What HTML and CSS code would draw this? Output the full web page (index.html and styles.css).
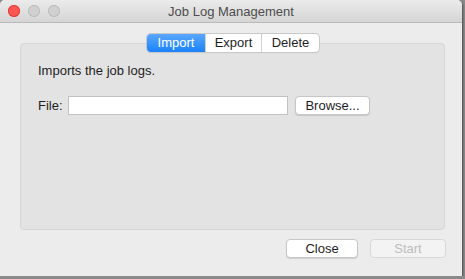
FILE: index.html
```html
<!DOCTYPE html>
<html>
<head>
    <link rel="stylesheet" href="styles.css">
</head>
<body>
<div class="window">
    <div class="titlebar">
        <div class="lights">
            <span class="light close-light"></span>
            <span class="light"></span>
            <span class="light"></span>
        </div>
        <div class="title">Job Log Management</div>
    </div>
    <div class="content">
        <div class="group">
            <div class="tabs">
                <span class="tab tab-active">Import</span>
                <span class="tab tab-mid">Export</span>
                <span class="tab">Delete</span>
            </div>
            <p class="desc">Imports the job logs.</p>
            <div class="file-row">
                <span class="file-label">File:</span>
                <input class="file-box" type="text">
                <button class="btn browse">Browse...</button>
            </div>
        </div>
        <div class="actions">
            <button class="btn action">Close</button>
            <button class="btn action disabled">Start</button>
        </div>
    </div>
</div>
</body>
</html>
```

FILE: styles.css
```css
body {
  margin: 0;
  background-color: #8a8a8a;
  font-family: "Liberation Sans", Arial, sans-serif;
  font-size: 13px;
  color: #1e1e1e;
}

.window {
  width: 462px;
  height: 276px;
  background-color: #ececec;
  border-radius: 5px 5px 0 0;
  box-shadow: 1px 1px 2px rgba(0, 0, 0, 0.45);
  overflow: hidden;
  display: flex;
  flex-direction: column;
}

.titlebar {
  height: 22px;
  background: linear-gradient(#ebebeb, #d5d5d5);
  border-bottom: 1px solid #b9b9b9;
  position: relative;
  display: flex;
  align-items: center;
  justify-content: center;
}

.lights {
  position: absolute;
  left: 8px;
  top: 5px;
  display: flex;
  gap: 8px;
}

.light {
  width: 12px;
  height: 12px;
  border-radius: 50%;
  background-color: #d0d0d0;
  box-shadow: inset 0 0 0 1px #bdbdbd;
}

.close-light {
  background-color: #fc5753;
  box-shadow: inset 0 0 0 1px #df3d39;
}

.title {
  font-size: 13px;
  color: #4d4d4d;
}

.content {
  flex: 1;
  padding: 20px 17px 0 20px;
  display: flex;
  flex-direction: column;
}

.group {
  position: relative;
  height: 185px;
  background-color: #e3e3e3;
  border: 1px solid #d6d6d6;
  border-radius: 4px;
  padding: 0 17px;
}

.tabs {
  position: absolute;
  left: 126px;
  top: -10px;
  display: flex;
  background-color: #ffffff;
  border-radius: 4px;
  box-shadow: 0 0 0 1px #c8c8c8, 0 1px 1px rgba(0, 0, 0, 0.15);
}

.tab {
  box-sizing: border-box;
  width: 58px;
  height: 18px;
  line-height: 18px;
  text-align: center;
  border-left: 1px solid #d2d2d2;
}

.tab-mid {
  width: 56px;
}

.tab-active {
  border-left: none;
  background: linear-gradient(#5aa7fb, #1a82fb);
  color: #ffffff;
  border-radius: 4px 0 0 4px;
}

.desc {
  margin: 19px 0 0 0;
  line-height: 16px;
}

.file-row {
  margin-top: 17px;
  display: flex;
  align-items: center;
}

.file-label {
  width: 30px;
}

.file-box {
  width: 218px;
  height: 17px;
  padding: 0;
  border: 1px solid #c2c2c2;
  background-color: #ffffff;
  margin: 0 7px 0 0;
}

.btn {
  font-family: "Liberation Sans", Arial, sans-serif;
  font-size: 13px;
  color: #1e1e1e;
  height: 19px;
  padding: 0;
  background-color: #ffffff;
  border: 1px solid #c6c6c6;
  border-radius: 4px;
  box-shadow: 0 1px 1px rgba(0, 0, 0, 0.12);
}

.browse {
  width: 75px;
}

.actions {
  display: flex;
  justify-content: flex-end;
  gap: 12px;
  margin-top: 9px;
  margin-right: -1px;
}

.action {
  width: 72px;
}

.disabled {
  width: 76px;
  color: #bdbdbd;
  background-color: #f3f3f3;
  border-color: #d8d8d8;
  box-shadow: none;
}
```
